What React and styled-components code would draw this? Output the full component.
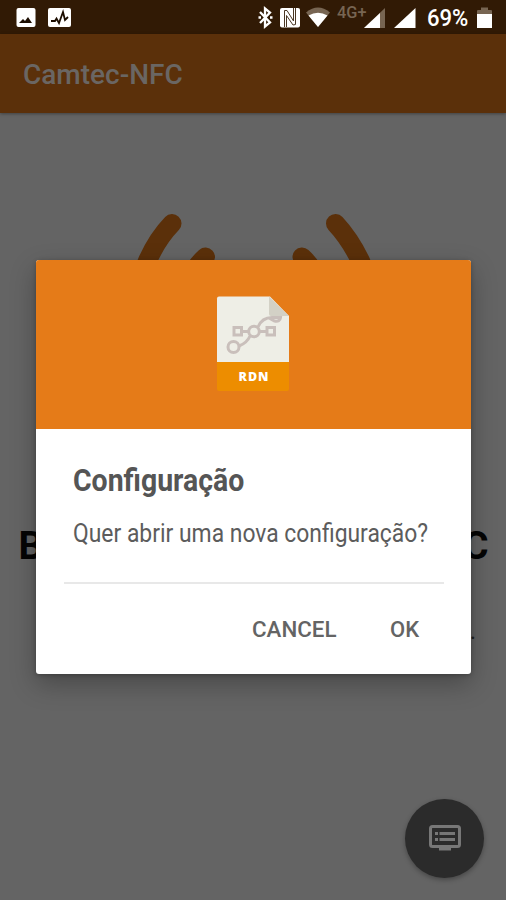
import React from 'react';
import styled, { createGlobalStyle } from 'styled-components';

const GlobalStyle = createGlobalStyle`
    * { box-sizing: border-box; }
    body {
        margin: 0;
        font-family: Roboto, 'Noto Sans', sans-serif;
    }
`

const Screen = styled.div`
    position: relative;
    display: flex;
    flex-direction: column;
    width: 506px;
    height: 900px;
    overflow: hidden;
    background: #646464;
`

const StatusBar = styled.header`
    display: flex;
    justify-content: space-between;
    height: 34px;
    padding: 0 14px 0 16px;
    background: #311a05;
`

const StatusGroup = styled.div`
    display: flex;
    height: 34px;
`

const StatusIcon = styled.svg`
    display: block;
    flex: none;
    width: ${({ $w }) => $w}px;
    height: 34px;
    margin-left: ${({ $gap }) => $gap || 0}px;
`

const Condensed = styled.span`
    display: block;
    white-space: nowrap;
    transform: scaleX(${({ $scale }) => $scale});
    transform-origin: 0 50%;
`

const Network = styled.div`
    width: 28px;
    margin-left: 7px;
    color: #776552;
    font-size: 17px;
    font-weight: 500;
    line-height: 25px;
`

const Percent = styled.div`
    width: 42px;
    margin-left: 11px;
    color: #fff;
    font-size: 23px;
    font-weight: 500;
    line-height: 37px;
`

const AppBar = styled.div`
    height: 79px;
    padding-left: 23px;
    background: #5b300a;
    box-shadow: 0 1px 3px rgba(0, 0, 0, .35);
    color: #6a6663;
    font-size: 27px;
    font-weight: 500;
    line-height: 83px;
`

const Content = styled.main`
    flex: 1;
    display: flex;
    flex-direction: column;
    align-items: center;
    padding-top: 87px;
`

const Waves = styled.svg`
    display: block;
    width: 260px;
    height: 180px;
`

const Heading = styled.h1`
    display: flex;
    justify-content: space-between;
    width: 471px;
    margin: 143px 0 0;
    padding-left: 1px;
    color: #050505;
    font-size: 39px;
    font-weight: 700;
    line-height: 47px;
`

const Note = styled.p`
    width: 446px;
    margin: 46px 0 0;
    color: #222;
    font-size: 24px;
    line-height: 30px;
    text-align: right;
`

const Fab = styled.button`
    position: absolute;
    right: 22px;
    bottom: 22px;
    display: flex;
    align-items: center;
    justify-content: center;
    width: 79px;
    height: 79px;
    padding: 0;
    border: 0;
    border-radius: 50%;
    background: #2b2b2b;
    box-shadow: 0 2px 5px rgba(0, 0, 0, .3);
`

const Dialog = styled.section`
    position: absolute;
    top: 260px;
    left: 36px;
    width: 435px;
    height: 414px;
    overflow: hidden;
    border-radius: 3px;
    background: #fff;
    box-shadow: 0 10px 26px rgba(0, 0, 0, .28), 0 1px 4px rgba(0, 0, 0, .25);
`

const DialogHeader = styled.div`
    display: flex;
    justify-content: center;
    height: 169px;
    padding: 36px 2px 0 0;
    background: #e57b18;
`

const DialogBody = styled.div`
    height: 155px;
    margin: 0 27px 0 28px;
    padding: 31px 0 0 8.5px;
    border-bottom: 2px solid #e8e8e8;
    color: #555;
`

const Title = styled.h2`
    margin: 0;
    font-size: 31px;
    font-weight: 700;
    line-height: 42px;
`

const Message = styled.p`
    margin: 11px 0 0;
    color: #5c5c5c;
    font-size: 26px;
    line-height: 40px;
`

const Actions = styled.div`
    display: flex;
    justify-content: flex-end;
    gap: 53px;
    padding: 26px 51px 0 0;
`

const Action = styled.button`
    width: ${({ $w }) => $w}px;
    padding: 0;
    border: 0;
    background: none;
    color: #646464;
    font-family: inherit;
    font-size: 22px;
    font-weight: 500;
    line-height: 40px;
    text-align: left;
`

const FileBadge = () => (
    <svg width="74" height="96" viewBox="0 0 74 96">
        <path d="M3 0.5H54L73 20V66H1V2.5Q1 .5 3 .5Z" fill="#eeeee6" />
        <path d="M53 0.5L73 20H55Q53 20 53 18Z" fill="#d3d1c6" />
        <path d="M1 66H73V93Q73 95 71 95H3Q1 95 1 93Z" fill="#ed8d00" />
        <g fill="none" stroke="#c9bfbb" strokeWidth="3">
            <rect x="18" y="31.5" width="7.5" height="7.5" />
            <rect x="51" y="31.5" width="7.5" height="7.5" />
            <circle cx="38" cy="35.5" r="5.3" />
            <circle cx="17.5" cy="51" r="5.5" />
            <path d="M26 35.5H32M44 35.5H50M23 50Q31 47 34 40M42 31Q46 21.5 56 21.5H64.5Q64 26 58.5 25L53 22" />
        </g>
        <text x="37.5" y="85" fill="#fff" fontFamily="'Open Sans', sans-serif" fontSize="12.5" fontWeight="800" textAnchor="middle" textLength="30">RDN</text>
    </svg>
)

const App = () => {
    return (
        <Screen>
            <GlobalStyle />
            <StatusBar>
                <StatusGroup>
                    <StatusIcon $w={20} viewBox="0 0 20 34">
                        <rect x=".5" y="8" width="19" height="19" rx="2" fill="#fff" />
                        <path d="M3 23L7 19L9 21L12 17L16 23Z" fill="#1c0d00" />
                    </StatusIcon>
                    <StatusIcon $w={24} $gap={12} viewBox="0 0 24 34">
                        <rect x="0" y="8" width="23" height="19" rx="2" fill="#fff" />
                        <path d="M3 21H7L8.5 18.5L11 23L15 12L17 20L20 17" fill="none" stroke="#1c0d00" strokeWidth="1.8" />
                    </StatusIcon>
                </StatusGroup>
                <StatusGroup>
                    <StatusIcon $w={15} viewBox="0 0 15 34">
                        <path d="M2 12L12 22.5L7 26.5V8.5L12 12.5L2 23" fill="none" stroke="#fff" strokeWidth="2.3" />
                        <path d="M.5 17.5H3M12 17.5H14.5" stroke="#fff" strokeWidth="2.3" />
                    </StatusIcon>
                    <StatusIcon $w={20} $gap={7} viewBox="0 0 20 34">
                        <rect x="0" y="8" width="20" height="19.5" rx="2" fill="#fff" />
                        <path d="M4.5 27V10.5L7 10.5L13.5 21V8M6.5 27V15.5L13 25L15.5 24.5V8" fill="none" stroke="#4a3724" strokeWidth="1" />
                    </StatusIcon>
                    <StatusIcon $w={24} $gap={6} viewBox="0 0 24 34">
                        <path d="M0 12.5Q12 2.5 24 12.5L12 27Z" fill="#776552" />
                        <path d="M2.5 15.5Q12 10 21.5 15.5L12 27Z" fill="#fff" />
                    </StatusIcon>
                    <Network><Condensed $scale={.96}>4G+</Condensed></Network>
                    <StatusIcon $w={22} $gap={-1} viewBox="0 0 22 34">
                        <path d="M0 28L21 8V28Z" fill="#776552" />
                        <path d="M0 28L16 13V28Z" fill="#fff" />
                    </StatusIcon>
                    <StatusIcon $w={22} $gap={8} viewBox="0 0 22 34">
                        <path d="M0 28L21.5 8V28Z" fill="#fff" />
                    </StatusIcon>
                    <Percent><Condensed $scale={.96}>69%</Condensed></Percent>
                    <StatusIcon $w={15} $gap={8} viewBox="0 0 15 34">
                        <path d="M4 7.5H11V10H14Q15 10 15 11V14H0V11Q0 10 1 10H4Z" fill="#776552" />
                        <path d="M0 14H15V28H0Z" fill="#fff" />
                    </StatusIcon>
                </StatusGroup>
            </StatusBar>
            <AppBar><Condensed $scale={1.037}>Camtec-NFC</Condensed></AppBar>
            <Content>
                <Waves viewBox="123 200 260 180">
                    <g fill="none" stroke="#5b300a" strokeWidth="19" strokeLinecap="round">
                        <path d="M172 223.5Q157 239 147 262Q132 296 148 332M335.5 223.5Q350 239 361 262Q376 296 359 332" />
                        <path d="M205.5 257Q180 280 190 320M302 257Q327 280 317 320" />
                    </g>
                </Waves>
                <Heading><span>B</span><span>C</span></Heading>
                <Note>.</Note>
            </Content>
            <Fab>
                <svg width="32" height="27" viewBox="0 0 32 27">
                    <rect x="1.5" y="1.5" width="29" height="20" rx="2" fill="none" stroke="#777" strokeWidth="3" />
                    <path d="M10 22H22V25.5H10ZM6 7H9V10H6ZM10.5 7H26V10H10.5ZM6 13H9V16H6ZM10.5 13H26V16H10.5Z" fill="#777" />
                </svg>
            </Fab>
            <Dialog>
                <DialogHeader><FileBadge /></DialogHeader>
                <DialogBody>
                    <Title><Condensed $scale={.917}>Configuração</Condensed></Title>
                    <Message><Condensed $scale={.88}>Quer abrir uma nova configuração?</Condensed></Message>
                </DialogBody>
                <Actions>
                    <Action $w={85}><Condensed $scale={1.015}>CANCEL</Condensed></Action>
                    <Action $w={30}><Condensed $scale={1}>OK</Condensed></Action>
                </Actions>
            </Dialog>
        </Screen>
    );
}

export default App;
